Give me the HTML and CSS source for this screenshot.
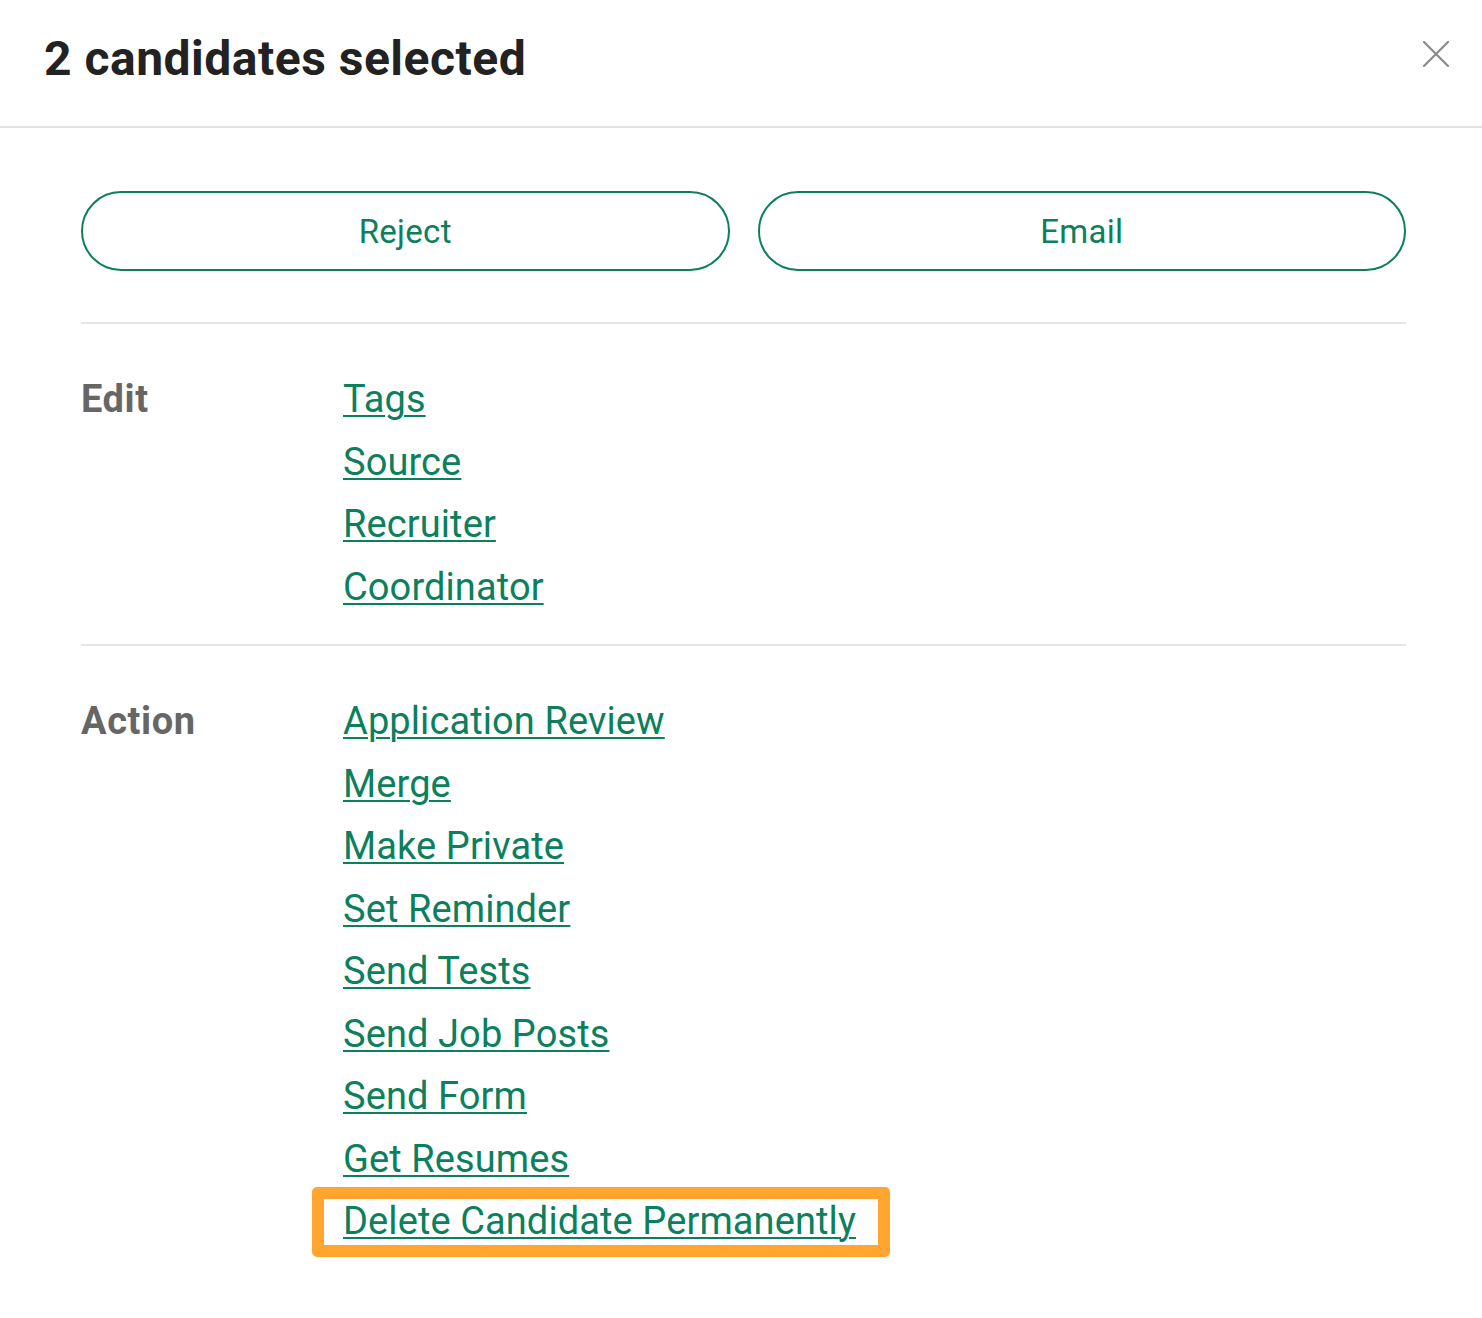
FILE: index.html
```html
<!DOCTYPE html>
<html>
<head>
    <meta charset="UTF-8">
    <title>Bulk Actions</title>
    <link rel="stylesheet" href="styles.css">
</head>
<body>
    <div class="modal">
        <div class="modal-header">
            <h1>2 candidates selected</h1>
            <button class="close" aria-label="Close">
                <svg width="26" height="26" viewBox="0 0 26 26">
                    <path d="M1 1 L25 25 M25 1 L1 25" stroke="#8a8a8a" stroke-width="2.2" stroke-linecap="round" fill="none"/>
                </svg>
            </button>
        </div>

        <div class="modal-body">
            <div class="buttons">
                <button class="pill">Reject</button>
                <button class="pill">Email</button>
            </div>

            <div class="section">
                <div class="label">Edit</div>
                <div class="links">
                    <a href="#">Tags</a>
                    <a href="#">Source</a>
                    <a href="#">Recruiter</a>
                    <a href="#">Coordinator</a>
                </div>
            </div>

            <div class="section">
                <div class="label">Action</div>
                <div class="links">
                    <a href="#">Application Review</a>
                    <a href="#">Merge</a>
                    <a href="#">Make Private</a>
                    <a href="#">Set Reminder</a>
                    <a href="#">Send Tests</a>
                    <a href="#">Send Job Posts</a>
                    <a href="#">Send Form</a>
                    <a href="#">Get Resumes</a>
                    <span class="highlight"><a href="#">Delete Candidate Permanently</a></span>
                </div>
            </div>
        </div>
    </div>
</body>
</html>
```

FILE: styles.css
```css
body {
    margin: 0;
    background: #fff;
    font-family: Roboto, "Liberation Sans", sans-serif;
    color: #222;
}
.modal {
    width: 1482px;
}
.modal-header {
    height: 126px;
    border-bottom: 2px solid #e2e2e2;
    display: flex;
    align-items: flex-start;
    justify-content: space-between;
    padding: 0 33px 0 44px;
}
.modal-header h1 {
    margin: 0;
    padding-top: 29px;
    font-size: 48px;
    font-weight: 700;
    line-height: 60px;
    letter-spacing: 0.5px;
    color: #222;
}
.close {
    margin-top: 41px;
    padding: 0;
    border: none;
    background: none;
    cursor: pointer;
}
.modal-body {
    padding: 63px 76px 40px 81px;
}
.buttons {
    display: grid;
    grid-template-columns: 1fr 1fr;
    gap: 28px;
    padding-bottom: 51px;
    border-bottom: 2px solid #e6e6e6;
}
.pill {
    height: 80px;
    border: 2px solid #0c7f5d;
    border-radius: 40px;
    background: #fff;
    color: #0c7f5d;
    font-family: inherit;
    font-size: 33px;
    letter-spacing: 0.3px;
    cursor: pointer;
}
.section {
    display: flex;
    padding: 44px 0 26px;
}
.section + .section {
    border-top: 2px solid #e6e6e6;
}
.label {
    width: 262px;
    flex-shrink: 0;
    font-size: 38px;
    font-weight: 700;
    line-height: 62.5px;
    letter-spacing: 0.6px;
    color: #666;
}
.links {
    display: flex;
    flex-direction: column;
    align-items: flex-start;
}
.links a {
    font-size: 38px;
    line-height: 62.5px;
    letter-spacing: 0.1px;
    color: #0c7f5d;
    text-decoration: underline;
    text-decoration-thickness: 2px;
    text-underline-offset: 3px;
}
.highlight {
    position: relative;
}
.highlight::after {
    content: "";
    position: absolute;
    left: -31px;
    right: -34px;
    top: -3px;
    bottom: -4px;
    border: 12px solid #ffa530;
    border-radius: 5px;
    pointer-events: none;
}
```
